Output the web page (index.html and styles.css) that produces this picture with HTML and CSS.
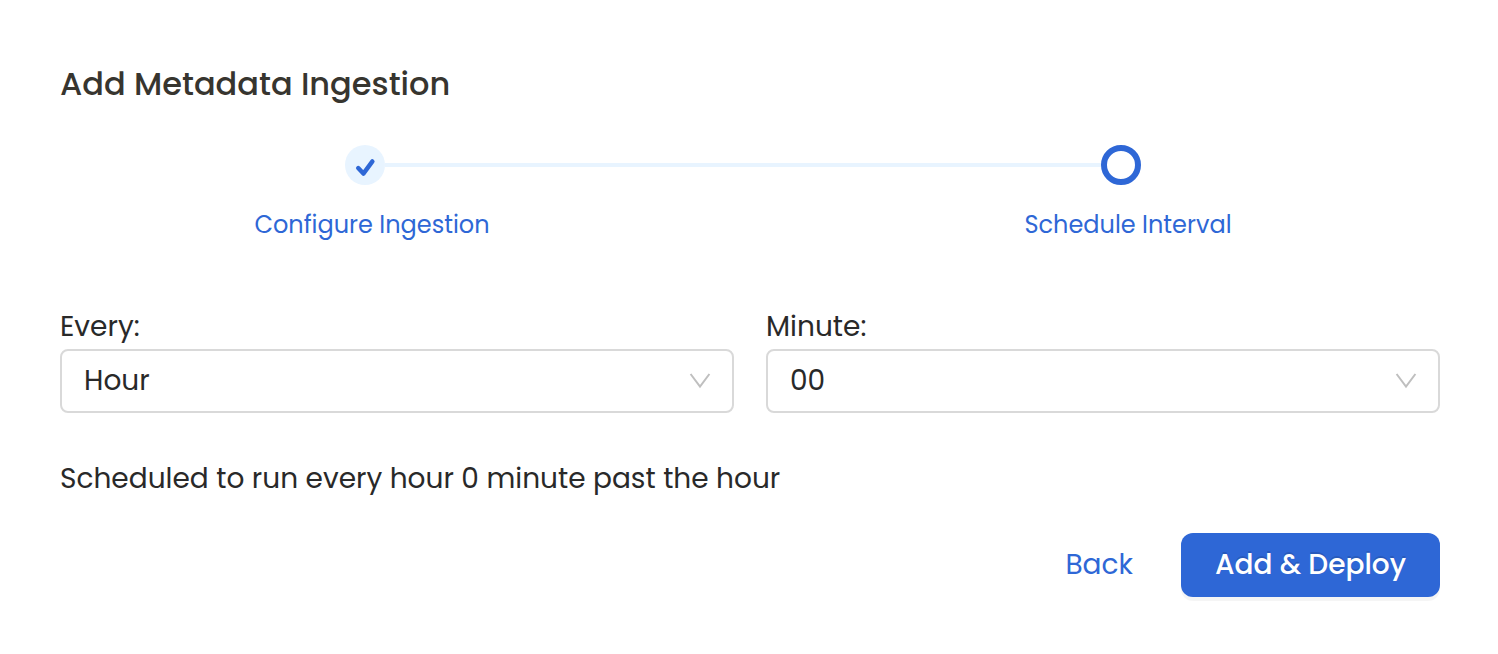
FILE: index.html
```html
<!DOCTYPE html>
<html lang="en">
<head>
<meta charset="utf-8">
<meta name="viewport" content="width=device-width, initial-scale=1">
<title>Add Metadata Ingestion</title>
<link rel="stylesheet" href="styles.css">
</head>
<body>
<main class="page">
  <h1 class="title">Add Metadata Ingestion</h1>

  <ol class="stepper">
    <li class="step step-done">
      <div class="track">
        <span class="marker marker-done">
          <svg class="check" viewBox="0 0 20 20" aria-hidden="true"><path d="M3.2 13 8.4 18.6 17.4 6.4"/></svg>
        </span>
        <span class="line"></span>
      </div>
      <span class="step-label">Configure Ingestion</span>
    </li>
    <li class="step" aria-current="step">
      <div class="track">
        <span class="marker marker-active"></span>
      </div>
      <span class="step-label">Schedule Interval</span>
    </li>
  </ol>

  <form class="form">
    <div class="fields">
      <div class="field">
        <label class="label" for="every">Every:</label>
        <div class="select-box">
          <select class="select" id="every"><option>Hour</option></select>
          <svg class="chevron" viewBox="0 0 22 16" aria-hidden="true"><path d="M1.6 1 11 13.6 20.4 1"/></svg>
        </div>
      </div>
      <div class="field">
        <label class="label" for="minute">Minute:</label>
        <div class="select-box">
          <select class="select" id="minute"><option>00</option></select>
          <svg class="chevron" viewBox="0 0 22 16" aria-hidden="true"><path d="M1.6 1 11 13.6 20.4 1"/></svg>
        </div>
      </div>
    </div>
    <p class="summary">Scheduled to run every hour 0 minute past the hour</p>
    <div class="actions">
      <button class="btn btn-link" type="button">Back</button>
      <button class="btn btn-primary" type="button">Add &amp; Deploy</button>
    </div>
  </form>
</main>
</body>
</html>
```
FILE: styles.css
```css
* {
  box-sizing: border-box;
}

body {
  margin: 0;
  background: #fff;
  color: #292929;
  font-family: Poppins, Inter, "Open Sans", sans-serif;
  font-size: 28px;
  line-height: 44px;
}

.page {
  padding: 60px 58px 56px 60px;
}

.title {
  margin: 0;
  color: #37352f;
  font-size: 32px;
  font-weight: 500;
  line-height: 48px;
}

.stepper {
  display: flex;
  margin: 37px 0 0;
  padding: 0 188px;
  list-style: none;
}

.step {
  width: 248px;
}

.step-done {
  flex: 1;
}

.track {
  display: flex;
  align-items: center;
  padding-left: 97px;
}

.marker {
  display: flex;
  flex: none;
  align-items: center;
  justify-content: center;
  width: 40px;
  height: 40px;
  border-radius: 50%;
}

.marker-done {
  background: #e8f4ff;
}

.marker-active {
  border: 6px solid #2e67d6;
}

.check {
  width: 20px;
  height: 20px;
  overflow: visible;
  fill: none;
  stroke: #2e67d6;
  stroke-width: 4.4;
  stroke-linecap: round;
  stroke-linejoin: round;
}

.line {
  flex: 1;
  height: 4px;
  margin-right: -97px;
  background: #e8f4ff;
}

.step-label {
  display: block;
  width: 248px;
  margin-top: 20px;
  color: #2e67d6;
  font-size: 24px;
  line-height: 40px;
  text-align: center;
  white-space: nowrap;
}

.form {
  margin-top: 60px;
}

.fields {
  display: grid;
  grid-template-columns: 1fr 1fr;
  gap: 32px;
}

.label {
  display: block;
}

.select-box {
  display: grid;
  align-items: center;
}

.select,
.chevron {
  grid-area: 1 / 1;
}

.select {
  width: 100%;
  height: 64px;
  padding: 0 60px 0 22px;
  border: 2px solid #d9d9d9;
  border-radius: 8px;
  appearance: none;
  background: #fff;
  color: inherit;
  font: inherit;
}

.chevron {
  justify-self: end;
  width: 22px;
  height: 16px;
  margin-right: 23px;
  fill: none;
  stroke: #bfbfbf;
  stroke-width: 2;
  pointer-events: none;
}

.summary {
  margin: 44px 0 0;
}

.actions {
  display: flex;
  justify-content: flex-end;
  gap: 16px;
  margin-top: 32px;
}

.btn {
  height: 64px;
  padding: 0 32px;
  border: 0;
  border-radius: 12px;
  font: inherit;
  cursor: pointer;
}

.btn-link {
  background: transparent;
  color: #2e67d6;
}

.btn-primary {
  padding: 0 34px;
  background: #2e67d6;
  box-shadow: 0 4px 0 rgba(0, 0, 0, 0.04);
  color: #fff;
  font-weight: 500;
  text-shadow: 0 -2px 0 rgba(0, 0, 0, 0.12);
}
```
